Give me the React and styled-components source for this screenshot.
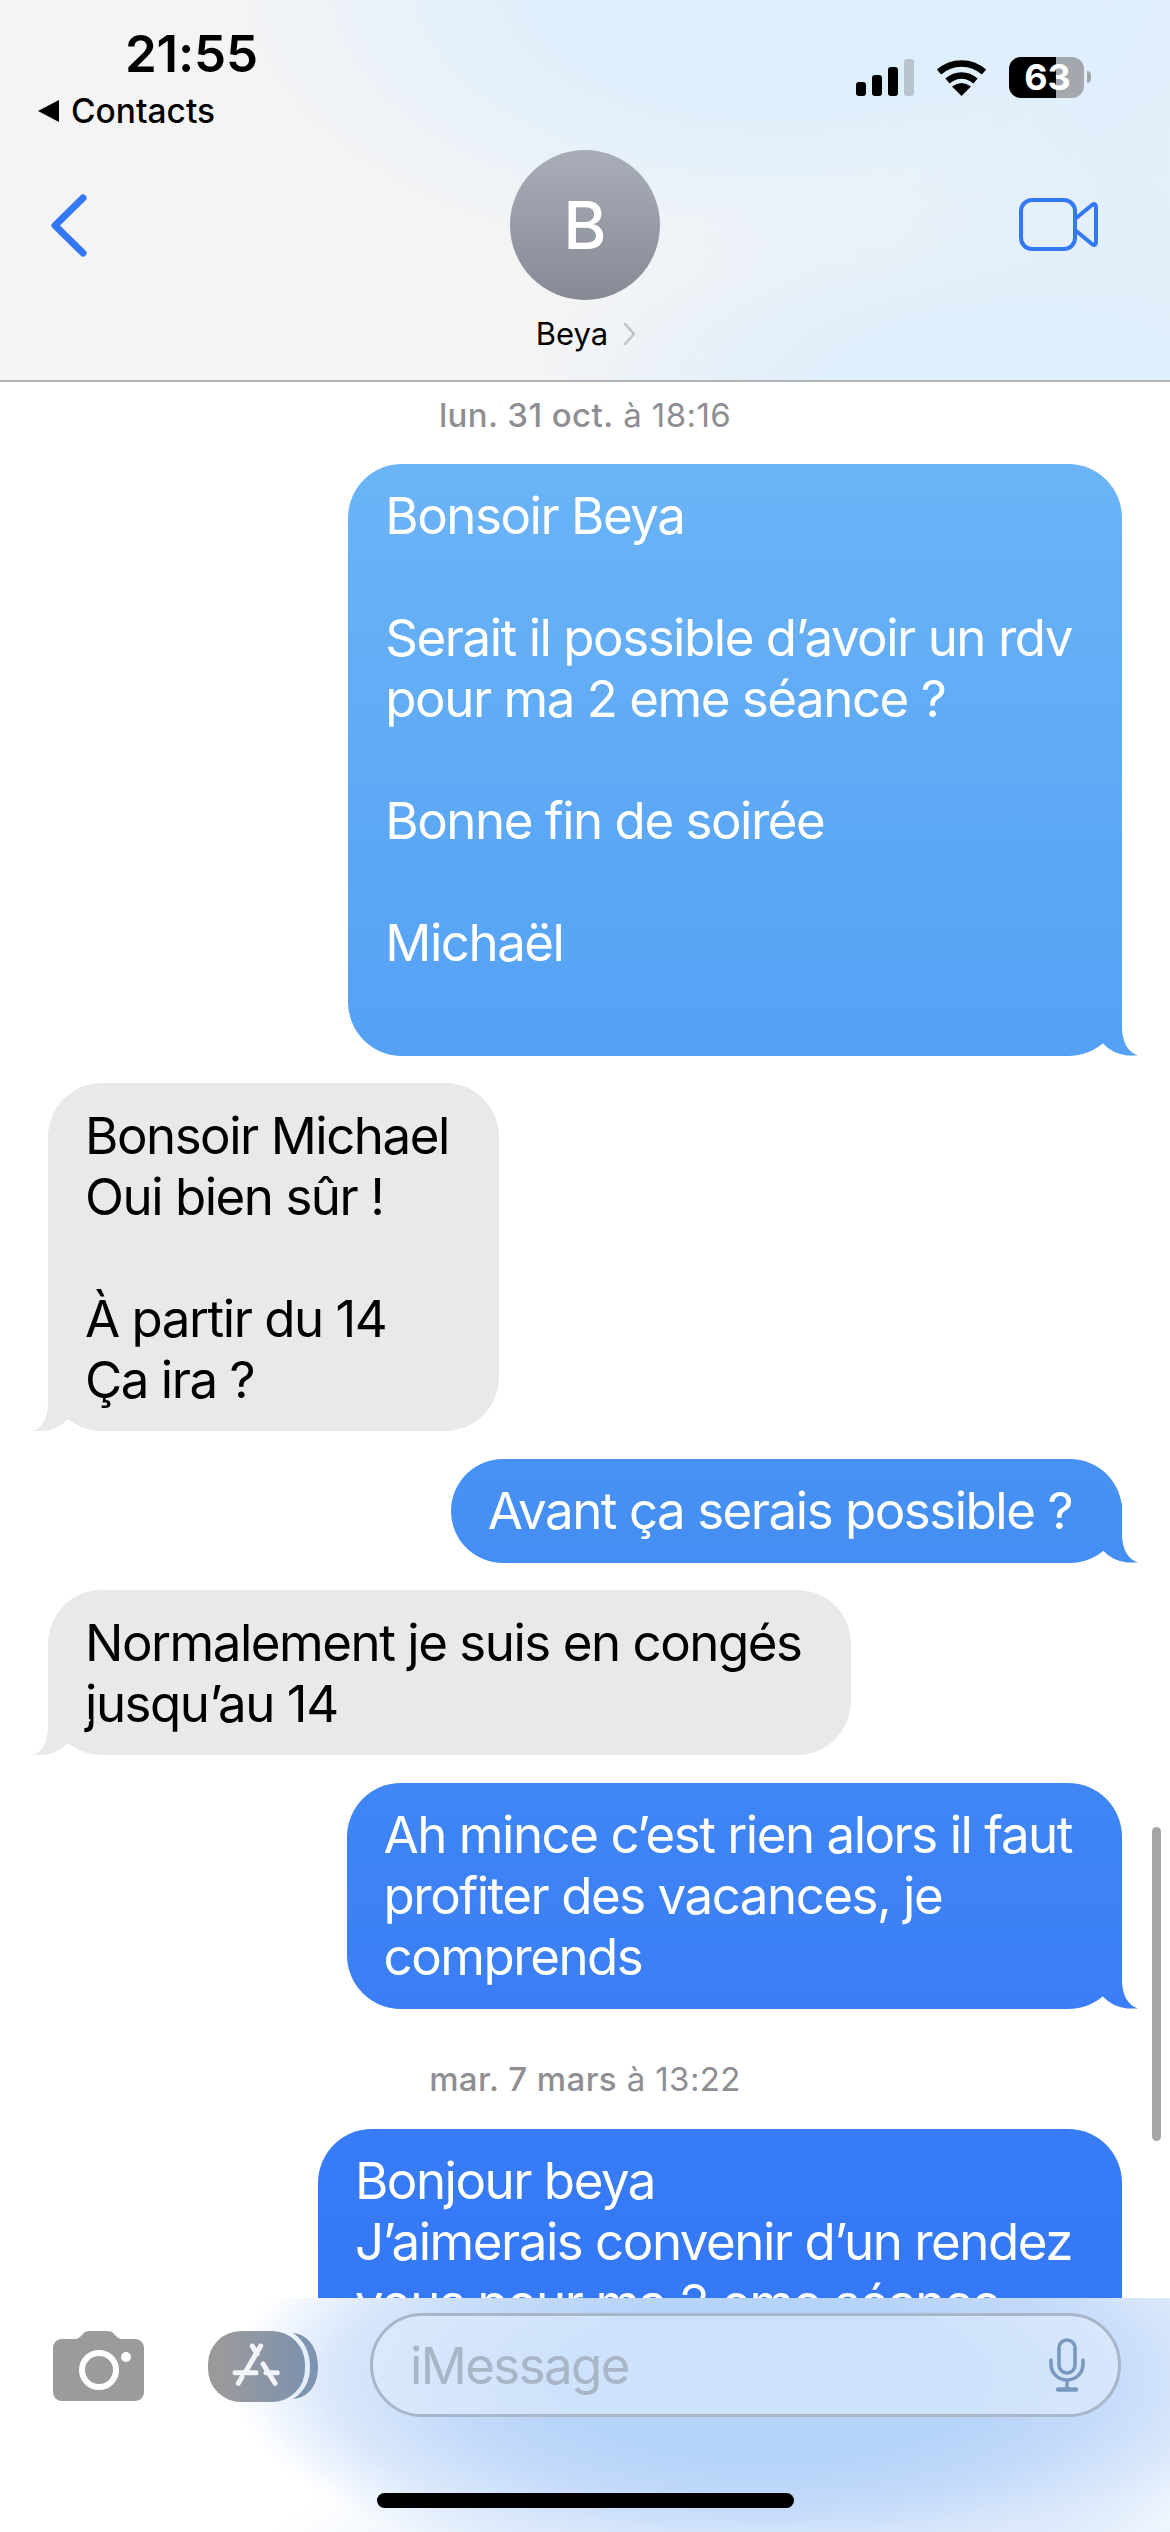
import React from 'react';
import styled, { createGlobalStyle } from 'styled-components';

const FONT = 'Inter, "Liberation Sans", sans-serif';
const BLUE = 'linear-gradient(180deg, #6bb4f7 0, #6bb4f7 463px, #55a1f5 1050px, #4690f3 1500px, #3b7ef6 2000px, #3478f6 2300px)';

const Global = createGlobalStyle`
  html, body { margin: 0; padding: 0; background: #fff; }
  body { font-family: ${FONT}; }
  * { box-sizing: border-box; }
`;

const Screen = styled.div`
  width: 1170px;
  height: 2532px;
  display: flex;
  flex-direction: column;
  overflow: hidden;
  background: #fff;
`;

const Header = styled.header`
  height: 382px;
  flex: none;
  border-bottom: 2px solid #b4b4b6;
  background:
    radial-gradient(ellipse 560px 300px at 780px -20px, #deeffc 40%, rgba(222, 239, 252, 0) 100%),
    radial-gradient(ellipse 480px 230px at 1000px 400px, #deeefb 35%, rgba(222, 238, 251, 0) 100%),
    radial-gradient(ellipse 300px 420px at 1180px 120px, #e3f0fb 30%, rgba(227, 240, 251, 0) 100%),
    #f4f4f5;
`;

const StatusRow = styled.div`
  height: 150px;
  display: flex;
  justify-content: space-between;
  align-items: flex-start;
`;

const StatusLeft = styled.div`
  display: flex;
  flex-direction: column;
  padding: 28px 0 0 38px;
`;

const Time = styled.div`
  margin-left: 87px;
  font-size: 51px;
  line-height: 52px;
  font-weight: 600;
  letter-spacing: -0.2px;
  color: #000;
`;

const ContactsLink = styled.div`
  display: flex;
  align-items: center;
  gap: 12px;
  margin-top: 11px;
  font-size: 33.5px;
  line-height: 40px;
  font-weight: 500;
  color: #000;
`;

const BackTriangle = styled.span`
  width: 0;
  height: 0;
  border-style: solid;
  border-width: 11px 21px 11px 0;
  border-color: transparent #000 transparent transparent;
`;

const StatusIcons = styled.div`
  display: flex;
  align-items: center;
  gap: 22px;
  padding: 57px 86px 0 0;
`;

const Battery = styled.div`
  position: relative;
  width: 75px;
  height: 41px;
  border-radius: 12px;
  background: linear-gradient(90deg, #000 0, #000 47px, #a3a8ae 47px, #a3a8ae 100%);
  color: #fff;
  font-size: 36px;
  line-height: 41px;
  font-weight: 700;
  text-align: center;
  padding-left: 2px;
  &::after {
    content: '';
    position: absolute;
    right: -7px;
    top: 14px;
    width: 4px;
    height: 12px;
    border-radius: 0 6px 6px 0;
    background: #a3a8ae;
  }
`;

const NavRow = styled.div`
  display: grid;
  grid-template-columns: 1fr auto 1fr;
`;

const BackButton = styled.div`
  padding: 44px 0 0 51px;
  display: flex;
`;

const VideoButton = styled.div`
  padding: 48px 72px 0 0;
  display: flex;
  justify-content: flex-end;
`;

const Contact = styled.div`
  display: flex;
  flex-direction: column;
  align-items: center;
`;

const Avatar = styled.div`
  width: 150px;
  height: 150px;
  border-radius: 50%;
  background: linear-gradient(180deg, #a9adb8, #868a95);
  color: #fff;
  font-size: 66px;
  font-weight: 500;
  display: flex;
  align-items: center;
  justify-content: center;
`;

const NameRow = styled.div`
  display: flex;
  align-items: center;
  gap: 15px;
  margin-top: 14px;
  padding-left: 2px;
  font-size: 31px;
  line-height: 40px;
  color: #000;
`;

const Thread = styled.main`
  position: relative;
  flex: 1;
  min-height: 0;
  overflow: hidden;
  padding: 13px 48px 0;
  display: flex;
  flex-direction: column;
  gap: 27.5px;
`;

const Stamp = styled.div`
  align-self: center;
  font-size: 33px;
  line-height: 40px;
  letter-spacing: 0.4px;
  color: #8e8e93;
  margin-top: ${p => p.$top || 0}px;
  margin-bottom: ${p => p.$bottom || 1}px;
  b { font-weight: 500; }
`;

const Bubble = styled.div`
  position: relative;
  flex: none;
  align-self: ${p => (p.$mine ? 'flex-end' : 'flex-start')};
  padding: 21.5px 50px 21.5px 37px;
  border-radius: 54px;
  font-size: 51px;
  line-height: 61px;
  letter-spacing: -1.47px;
  white-space: pre;
  color: ${p => (p.$mine ? '#fff' : '#000')};
  background: ${p => (p.$mine ? BLUE : '#e9e9e9')};
  background-attachment: fixed;
`;

const Tail = styled.span`
  position: absolute;
  bottom: 0;
  width: 70px;
  height: 60px;
  background: inherit;
  background-attachment: fixed;
  ${p => p.$mine
    ? `right: -16px; clip-path: path('M54 0 L54 33 Q55 55 70 60 L59 60 Q44 58 35 48 L12 25 Z');`
    : `left: -15px; clip-path: path('M15 0 L15 33 Q14 55 0 60 L11 60 Q26 58 35 48 L58 25 Z');`}
`;

const Scrollbar = styled.div`
  position: absolute;
  right: 9px;
  top: 1445px;
  width: 9px;
  height: 314px;
  border-radius: 5px;
  background: #a6a6a6;
`;

const Composer = styled.footer`
  position: relative;
  height: 234px;
  flex: none;
  display: flex;
  flex-direction: column;
  background:
    radial-gradient(ellipse 540px 210px at 770px 80px, #b6d3f9 40%, #c4dbfa 62%, #dbe8fb 82%, rgba(219, 232, 251, 0) 100%),
    radial-gradient(ellipse 560px 200px at 800px 300px, #dfebfb 50%, rgba(223, 235, 251, 0) 100%),
    #fff;
`;

const ComposerRow = styled.div`
  display: flex;
  align-items: flex-start;
  padding: 15px 49px 0 53px;
`;

const Tool = styled.div`
  display: flex;
  margin-top: ${p => p.$top}px;
  margin-right: ${p => p.$right}px;
`;

const Field = styled.div`
  flex: 1;
  height: 104px;
  border: 3px solid #a9b6c9;
  border-radius: 52px;
  background: rgba(228, 239, 253, 0.55);
  display: flex;
  align-items: center;
  justify-content: space-between;
  padding: 0 33px 0 37px;
`;

const Placeholder = styled.span`
  font-size: 51px;
  letter-spacing: -1.6px;
  color: #a9b6c7;
`;

const HomeBar = styled.div`
  align-self: center;
  width: 417px;
  height: 15px;
  border-radius: 8px;
  background: #000;
  margin-top: 76px;
`;

const Signal = () => (
  <svg width="58" height="37" viewBox="0 0 58 37">
    <rect x="0" y="23" width="10" height="14" rx="3" fill="#000" />
    <rect x="16" y="16" width="10" height="21" rx="3" fill="#000" />
    <rect x="32" y="8" width="10" height="29" rx="3" fill="#000" />
    <rect x="48" y="0" width="10" height="37" rx="3" fill="#b8c4cc" />
  </svg>
);

const Wifi = () => (
  <svg width="51" height="37" viewBox="0 0 51 37">
    <path d="M3 13 C16 1.5 35 1.5 48 13" fill="none" stroke="#000" strokeWidth="6.5" />
    <path d="M11.5 22 C20 14.5 31 14.5 39.5 22" fill="none" stroke="#000" strokeWidth="6.5" />
    <path d="M25.5 37 L16 27.5 Q25.5 20.5 35 27.5 Z" fill="#000" />
  </svg>
);

const Chevron = () => (
  <svg width="36" height="63" viewBox="0 0 36 63">
    <path d="M32 4 L4 31.5 L32 59" fill="none" stroke="#3478f6" strokeWidth="7" strokeLinecap="round" strokeLinejoin="round" />
  </svg>
);

const SmallChevron = () => (
  <svg width="13" height="24" viewBox="0 0 13 24">
    <path d="M2 2 L11 12 L2 22" fill="none" stroke="#c2c2c6" strokeWidth="2.5" strokeLinecap="round" strokeLinejoin="round" />
  </svg>
);

const Video = () => (
  <svg width="79" height="53" viewBox="0 0 79 53">
    <rect x="2" y="2" width="54" height="49" rx="11" fill="none" stroke="#3478f6" strokeWidth="4" />
    <path d="M56 21 L73 7 Q77 4.5 77 9 V44 Q77 48.5 73 46 L56 32" fill="none" stroke="#3478f6" strokeWidth="4" strokeLinejoin="round" />
  </svg>
);

const Camera = () => (
  <svg width="91" height="70" viewBox="0 0 91 70">
    <path d="M9 8 H22 C25 8 27 6 29 4 C31 1.5 33 0 37 0 H54 C58 0 60 1.5 62 4 C64 6 66 8 69 8 H82 C87 8 91 12 91 17 V61 C91 66 87 70 82 70 H9 C4 70 0 66 0 61 V17 C0 12 4 8 9 8 Z" fill="#9b9b9b" />
    <circle cx="46" cy="39" r="17" fill="none" stroke="#fff" strokeWidth="6" />
    <circle cx="73" cy="26" r="5" fill="#fff" />
  </svg>
);

const AppStore = () => (
  <svg width="110" height="72" viewBox="0 0 110 72">
    <defs>
      <linearGradient id="pill" x1="0" x2="1" y1="0" y2="0">
        <stop offset="0.15" stopColor="#9a9a9c" />
        <stop offset="1" stopColor="#7d92ae" />
      </linearGradient>
    </defs>
    <path d="M85 2 C104 4 110 22 110 36 C110 50 104 66 85 68 C97 60 102 50 102 36 C102 22 97 10 85 2 Z" fill="#7f94b0" />
    <rect x="0" y="0" width="97" height="71" rx="33" fill="url(#pill)" />
    <g stroke="#f1f4f8" strokeWidth="5" strokeLinecap="round" fill="none">
      <path d="M44.3 15 L49 23 M55 33 L67 52.3" />
      <path d="M52.7 15 L38 40" />
      <path d="M34 46 L30.3 52.3" />
      <path d="M27 41.7 H48 M58 41.7 H69.3" />
    </g>
  </svg>
);

const Mic = () => (
  <svg width="36" height="54" viewBox="0 0 36 54">
    <rect x="10" y="2" width="16" height="33" rx="8" fill="none" stroke="#7a98bf" strokeWidth="3.5" />
    <path d="M2 22 V26 C2 35 9 42 18 42 C27 42 34 35 34 26 V22" fill="none" stroke="#7a98bf" strokeWidth="3.5" strokeLinecap="round" />
    <path d="M18 42 V50" stroke="#7a98bf" strokeWidth="3.5" />
    <path d="M9 51.5 H27" stroke="#7a98bf" strokeWidth="4.5" strokeLinecap="round" />
  </svg>
);

const messages = [
  { id: 1, mine: true, text: 'Bonsoir Beya\n\nSerait il possible d’avoir un rdv\npour ma 2 eme séance ?\n\nBonne fin de soirée\n\nMichaël\n ' },
  { id: 2, mine: false, text: 'Bonsoir Michael\nOui bien sûr !\n\nÀ partir du 14\nÇa ira ?' },
  { id: 3, mine: true, text: 'Avant ça serais possible ?' },
  { id: 4, mine: false, text: 'Normalement je suis en congés\njusqu’au 14' },
  { id: 5, mine: true, text: 'Ah mince c’est rien alors il faut\nprofiter des vacances, je\ncomprends' },
];

export default function App() {
  return (
    <Screen>
      <Global />
      <Header>
        <StatusRow>
          <StatusLeft>
            <Time>21:55</Time>
            <ContactsLink><BackTriangle />Contacts</ContactsLink>
          </StatusLeft>
          <StatusIcons>
            <Signal />
            <Wifi />
            <Battery>63</Battery>
          </StatusIcons>
        </StatusRow>
        <NavRow>
          <BackButton><Chevron /></BackButton>
          <Contact>
            <Avatar>B</Avatar>
            <NameRow>Beya <SmallChevron /></NameRow>
          </Contact>
          <VideoButton><Video /></VideoButton>
        </NavRow>
      </Header>
      <Thread>
        <Stamp><b>lun. 31 oct.</b> à 18:16</Stamp>
        {messages.map(m => (
          <Bubble key={m.id} $mine={m.mine}>
            {m.text}
            <Tail $mine={m.mine} />
          </Bubble>
        ))}
        <Stamp $top={23} $bottom={2}><b>mar. 7 mars</b> à 13:22</Stamp>
        <Bubble $mine>
          {'Bonjour beya\nJ’aimerais convenir d’un rendez\nvous pour ma 2 eme séance\n '}
        </Bubble>
        <Scrollbar />
      </Thread>
      <Composer>
        <ComposerRow>
          <Tool $top={18} $right={64}><Camera /></Tool>
          <Tool $top={18} $right={52}><AppStore /></Tool>
          <Field>
            <Placeholder>iMessage</Placeholder>
            <Mic />
          </Field>
        </ComposerRow>
        <HomeBar />
      </Composer>
    </Screen>
  );
}
